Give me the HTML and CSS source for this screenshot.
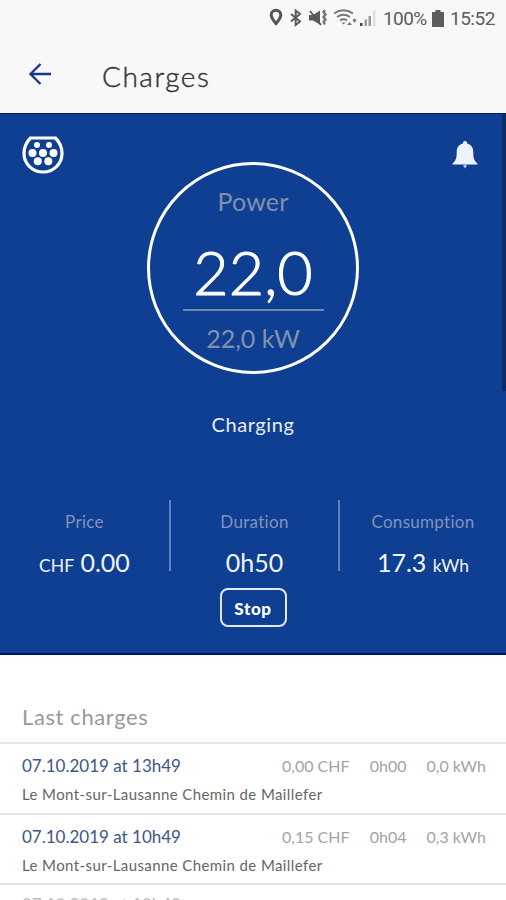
FILE: index.html
```
<!DOCTYPE html>
<html lang="en">

<head>
    <meta charset="utf-8">
    <meta name="viewport" content="width=device-width, initial-scale=1.0">
    <title>Charges</title>
    <link rel="stylesheet" href="styles.css">
</head>

<body>
    <div class="statusbar">
        <svg class="status-icons" width="110" height="24" viewBox="0 0 110 24">
            <!-- location -->
            <path d="M8 4.200a4.800 4.600 0 0 0-4.800 4.600c0 3.400 4.800 8.700 4.800 8.700s4.800-5.300 4.800-8.700A4.800 4.600 0 0 0 8 4.200z" fill="none" stroke="#555" stroke-width="3" />
            <!-- bluetooth -->
            <path d="M23 8l9 7.500-4.300 3.500V4.500L32 8l-9 7.500" fill="none" stroke="#5c5c5c" stroke-width="2" />
            <!-- sound off -->
            <path d="M41 9h4l7-4.500v14L45 14.500h-4z" fill="#5c5c5c" />
            <path d="M42 5l11 14" stroke="#555" stroke-width="1.800" />
            <path d="M57 4l-1.500 2 2 2.500-2 2.500 2 2.500-2 2.500 1.500 2.500" fill="none" stroke="#777" stroke-width="2.400" />
            <!-- wifi -->
            <path d="M66 7.500q9.500-6.500 19 0M69 11q6.500-4.500 13 0M72 14.500q3.500-2.500 7 0" fill="none" stroke="#777" stroke-width="1.900" />
            <path d="M73.500 16.500h4l-2 2zM79 19l2.500-3 2.500 3zM84.500 14l2-1.500 2 1.500-2 3z" fill="#777" />
            <!-- signal -->
            <path d="M92 17h2.500v3H92z" fill="#444" />
            <path d="M96.500 13.500h2.500V20h-2.500zM100.500 10h2.500v10h-2.500z" fill="#999" />
            <path d="M105 4.500h2.500V20H105z" fill="#e0e0e0" />
        </svg>
        <span class="battery-text">100%</span>
        <svg class="battery" width="12" height="17" viewBox="0 0 12 17">
            <path d="M3.500 0h5v2H12v15H0V2h3.500z" fill="#5c5c5c" />
        </svg>
        <span class="clock">15:52</span>
    </div>

    <header>
        <svg class="back" width="24" height="24" viewBox="0 0 24 24">
            <path d="M23 12H2.500M12.500 2L2.500 12l10 10" fill="none" stroke="#15358f" stroke-width="2.300" />
        </svg>
        <h1>Charges</h1>
    </header>

    <main>
        <section class="panel">
            <div class="panel-icons">
                <svg width="42" height="39" viewBox="0 0 42 39">
                    <path d="M8.500 2h25C38 6.500 40 11 40 17.500a19 18.500 0 0 1-38 0C2 11 4 6.500 8.500 2z" fill="none" stroke="#fff" stroke-width="3.200" />
                    <g fill="#fff">
                        <circle cx="15" cy="9" r="3" />
                        <circle cx="27" cy="9" r="3" />
                        <circle cx="10.500" cy="17" r="4" />
                        <circle cx="21" cy="17" r="4" />
                        <circle cx="31.500" cy="17" r="4" />
                        <circle cx="15.800" cy="25.300" r="4" />
                        <circle cx="26.300" cy="25.300" r="4" />
                    </g>
                </svg>
                <svg class="bell" width="26" height="29" viewBox="0 0 26 29">
                    <path d="M13 0a2 2 0 0 1 2 2.500c4.500 1 6.300 4.500 6.300 8.700 0 6 .7 8.300 4.200 11.300v1H.5v-1c3.500-3 4.200-5.300 4.200-11.300 0-4.200 1.800-7.700 6.300-8.700A2 2 0 0 1 13 0z" fill="#eef3ff" />
                    <path d="M11.500 23.500h3v2l-1.500 2-1.500-2z" fill="#b5c4e6" />
                </svg>
            </div>

            <div class="circle">
                <p class="power">Power</p>
                <p class="current">22,0</p>
                <p class="max">22,0 kW</p>
            </div>
            <p class="state">Charging</p>

            <div class="stats">
                <div class="stat">
                    <p class="label">Price</p>
                    <p class="value"><small>CHF</small> 0.00</p>
                </div>
                <div class="stat">
                    <p class="label">Duration</p>
                    <p class="value">0h50</p>
                </div>
                <div class="stat">
                    <p class="label">Consumption</p>
                    <p class="value">17.3 <small>kWh</small></p>
                </div>
            </div>
            <button class="stop">Stop</button>
            <div class="scrollbar"></div>
        </section>

        <section class="history">
            <h2>Last charges</h2>
            <article class="charge">
                <div class="charge-top">
                    <span class="date">07.10.2019 at 13h49</span>
                    <span class="price">0,00 CHF</span>
                    <span class="time">0h00</span>
                    <span class="energy">0,0 kWh</span>
                </div>
                <p class="place">Le Mont-sur-Lausanne Chemin de Maillefer</p>
            </article>
            <article class="charge">
                <div class="charge-top">
                    <span class="date">07.10.2019 at 10h49</span>
                    <span class="price">0,15 CHF</span>
                    <span class="time">0h04</span>
                    <span class="energy">0,3 kWh</span>
                </div>
                <p class="place">Le Mont-sur-Lausanne Chemin de Maillefer</p>
            </article>
            <article class="charge faded">
                <div class="charge-top">
                    <span class="date">07.10.2019 at 10h49</span>
                </div>
            </article>
        </section>
    </main>
</body>

</html>
```
FILE: styles.css
```
* {
    box-sizing: border-box;
}

body {
    margin: 0;
    height: 900px;
    overflow: hidden;
    background-color: white;
    font-family: Lato, sans-serif;
}

main {
    height: 787px;
    overflow: hidden;
}

p, h1, h2 {
    margin: 0;
    font-weight: 400;
    white-space: nowrap;
}

/* top of the phone */
.statusbar {
    height: 36px;
    padding-right: 10px;
    display: flex;
    align-items: center;
    justify-content: flex-end;
    background-color: #f8f8f8;
    font-family: Roboto, sans-serif;
    font-size: 19px;
    color: #5c5c5c;
}

.status-icons {
    margin-right: 5px;
}

.battery-text {
    width: 44px;
    letter-spacing: -0.6px;
}

.battery {
    margin: 0 6px 0 5px;
}

.clock {
    width: 46px;
    letter-spacing: -0.5px;
}

header {
    height: 77px;
    padding: 0 0 2px 28px;
    display: flex;
    align-items: center;
    background-color: #f8f8f8;
}

h1 {
    margin: 4px 0 0 50px;
    font-size: 28px;
    font-weight: 300;
    line-height: 40px;
    letter-spacing: 1.5px;
    color: #333;
    -webkit-text-stroke: 0.4px #333;
}

.panel {
    position: relative;
    height: 542px;
    display: flex;
    flex-direction: column;
    align-items: center;
    background-color: #0f3f92;
    border-top: 1px solid #061a68;
    border-bottom: 2px solid #000f78;
    color: white;
}

.panel-icons {
    width: 100%;
    height: 48px;
    padding: 22px 28px 0 22px;
    display: flex;
    justify-content: space-between;
}

.bell {
    margin-top: 5px;
}

.circle {
    width: 212px;
    height: 212px;
    border: 3px solid white;
    border-radius: 50%;
    display: flex;
    flex-direction: column;
    align-items: center;
}

.power {
    margin-top: 20px;
    font-size: 25px;
    line-height: 32px;
    letter-spacing: 0.2px;
    color: #8091b0;
}

.current {
    width: 141px;
    height: 94px;
    padding-top: 19px;
    border-bottom: 2px solid #7188b8;
    text-align: center;
    font-size: 61px;
    font-weight: 300;
    line-height: 72px;
    -webkit-text-stroke: 1px white;
}

.max {
    margin-top: 11px;
    font-size: 25px;
    line-height: 32px;
    color: #8091b0;
}

.state {
    margin-top: 37px;
    font-size: 20px;
    line-height: 26px;
    letter-spacing: 0.6px;
    color: #e5edfb;
}

.stats {
    width: 100%;
    height: 71px;
    margin-top: 63px;
    display: grid;
    grid-template-columns: 171px 169px 166px;
    grid-template-rows: 71px;
}

.stat {
    padding-top: 11px;
    border-right: 2px solid #6482ba;
    text-align: center;
}

.stat:last-child {
    border-right: none;
}

.label {
    font-size: 17px;
    line-height: 22px;
    letter-spacing: 0.3px;
    color: #8193b9;
}

.value {
    margin-top: 13px;
    font-size: 25px;
    line-height: 32px;
    color: #f0f4fc;
}

.value small {
    font-size: 17.5px;
}

.stop {
    width: 67px;
    height: 39px;
    margin-top: 17px;
    padding: 2px 0 0;
    border: 2px solid #e1e8f7;
    border-radius: 8px;
    background: none;
    color: white;
    font-family: Lato, sans-serif;
    font-size: 17px;
    font-weight: 900;
    letter-spacing: 0.6px;
}

/* lies over the blue panel */
.scrollbar {
    position: absolute;
    top: 0;
    right: 0;
    width: 4px;
    height: 277px;
    background-color: #0b2c67;
}

h2 {
    height: 87px;
    padding: 48px 0 0 22px;
    font-size: 22px;
    line-height: 28px;
    letter-spacing: 0.6px;
    color: #999;
}

.charge {
    height: 70.5px;
    padding: 11px 20px 0 22px;
    border-top: 2px solid #e6e6e6;
}

.charge-top {
    display: flex;
    align-items: center;
    line-height: 22px;
    font-size: 16px;
    color: #a3a3a3;
    white-space: nowrap;
}

.date {
    width: 261px;
    font-size: 17px;
    color: #3c5686;
}

.price {
    width: 88px;
}

.time {
    width: 57px;
}

.place {
    margin-top: 7px;
    font-size: 15px;
    line-height: 20px;
    letter-spacing: 0.4px;
    color: #666;
}

.faded {
    padding-top: 9px;
}

.faded .date {
    color: #bbb;
}
```
